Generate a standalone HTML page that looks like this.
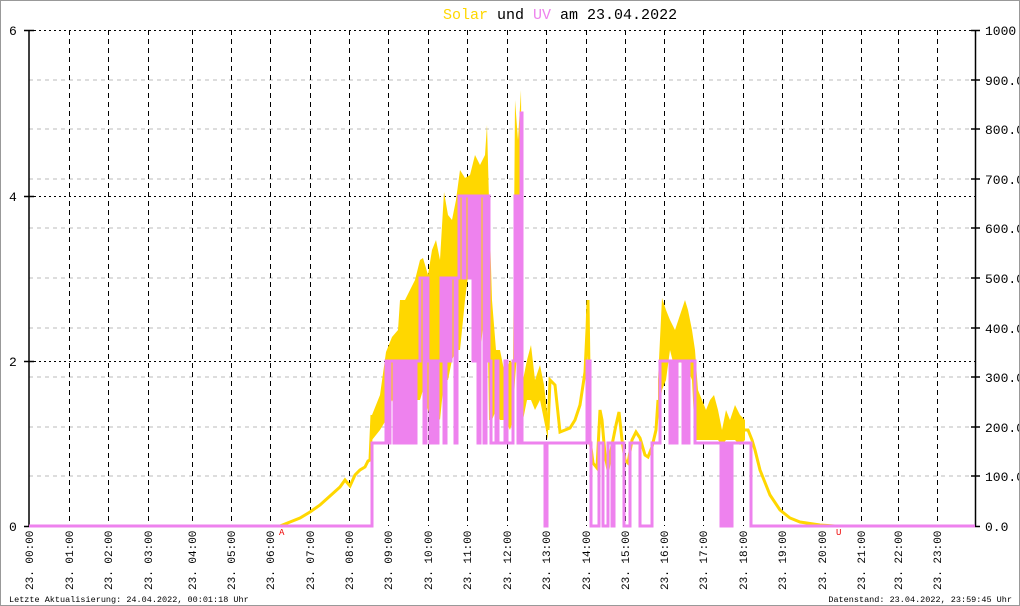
<!DOCTYPE html>
<html><head><meta charset="utf-8"><style>
html,body{margin:0;padding:0;background:#fff}
#w{position:relative;width:1018px;height:604px;border:1px solid #999;overflow:hidden;font-family:"Liberation Mono",monospace}
</style></head><body><div id="w">
<svg width="1018" height="604" viewBox="1 1 1018 604" xmlns="http://www.w3.org/2000/svg" font-family="Liberation Mono, monospace">
<g stroke="#bbb" stroke-width="1" stroke-dasharray="4,4">
<line x1="29" y1="80" x2="975" y2="80"/><line x1="29" y1="129" x2="975" y2="129"/><line x1="29" y1="179" x2="975" y2="179"/><line x1="29" y1="228" x2="975" y2="228"/><line x1="29" y1="278" x2="975" y2="278"/><line x1="29" y1="328" x2="975" y2="328"/><line x1="29" y1="377" x2="975" y2="377"/><line x1="29" y1="427" x2="975" y2="427"/><line x1="29" y1="476" x2="975" y2="476"/>
</g>
<g stroke="#000" stroke-width="1" stroke-dasharray="2,3">
<line x1="29" y1="30.5" x2="975" y2="30.5"/><line x1="29" y1="196.5" x2="975" y2="196.5"/><line x1="29" y1="361.5" x2="975" y2="361.5"/>
</g>
<g stroke="#000" stroke-width="1" stroke-dasharray="5,4">
<line x1="69.5" y1="30" x2="69.5" y2="526"/><line x1="108.5" y1="30" x2="108.5" y2="526"/><line x1="148.5" y1="30" x2="148.5" y2="526"/><line x1="192.5" y1="30" x2="192.5" y2="526"/><line x1="231.5" y1="30" x2="231.5" y2="526"/><line x1="270.5" y1="30" x2="270.5" y2="526"/><line x1="310.5" y1="30" x2="310.5" y2="526"/><line x1="349.5" y1="30" x2="349.5" y2="526"/><line x1="388.5" y1="30" x2="388.5" y2="526"/><line x1="428.5" y1="30" x2="428.5" y2="526"/><line x1="467.5" y1="30" x2="467.5" y2="526"/><line x1="507.5" y1="30" x2="507.5" y2="526"/><line x1="546.5" y1="30" x2="546.5" y2="526"/><line x1="586.5" y1="30" x2="586.5" y2="526"/><line x1="625.5" y1="30" x2="625.5" y2="526"/><line x1="664.5" y1="30" x2="664.5" y2="526"/><line x1="703.5" y1="30" x2="703.5" y2="526"/><line x1="743.5" y1="30" x2="743.5" y2="526"/><line x1="782.5" y1="30" x2="782.5" y2="526"/><line x1="822.5" y1="30" x2="822.5" y2="526"/><line x1="861.5" y1="30" x2="861.5" y2="526"/><line x1="898.5" y1="30" x2="898.5" y2="526"/><line x1="937.5" y1="30" x2="937.5" y2="526"/>
</g>
<g stroke="#000" stroke-width="1.5">
<line x1="29" y1="30" x2="29" y2="526"/><line x1="975.5" y1="30" x2="975.5" y2="526"/>
<line x1="24" y1="30.5" x2="34" y2="30.5"/><line x1="24" y1="196.5" x2="34" y2="196.5"/><line x1="24" y1="361.5" x2="34" y2="361.5"/><line x1="24" y1="526.5" x2="34" y2="526.5"/>
<line x1="971" y1="30.5" x2="980" y2="30.5"/><line x1="971" y1="80" x2="980" y2="80"/><line x1="971" y1="129" x2="980" y2="129"/><line x1="971" y1="179" x2="980" y2="179"/><line x1="971" y1="228" x2="980" y2="228"/><line x1="971" y1="278" x2="980" y2="278"/><line x1="971" y1="328" x2="980" y2="328"/><line x1="971" y1="377" x2="980" y2="377"/><line x1="971" y1="427" x2="980" y2="427"/><line x1="971" y1="476" x2="980" y2="476"/><line x1="971" y1="526.5" x2="980" y2="526.5"/>
</g>
<!-- solar -->
<polygon fill="#ffd700" points="372,415 380,395 386,352 392,337 398,330 400,300 405,300 410,290 415,280 420,260 423,258 428,275 432,250 436,240 440,260 444,192 448,215 452,220 456,200 460,170 465,178 470,175 475,155 480,165 485,155 487,125 489,200 492,300 496,350 500,350 505,375 510,360 513,365 515,100 518,140 521,90 523,380 527,360 531,345 535,380 540,365 544,385 548,420 548,440 544,420 540,400 535,410 531,400 527,400 523,420 521,390 518,340 515,380 513,420 510,430 505,420 500,420 496,410 492,420 489,420 487,280 485,300 480,360 475,280 470,260 465,300 460,350 456,350 452,360 448,380 444,380 440,420 436,410 432,430 428,410 423,390 420,400 415,400 410,410 405,400 400,410 398,420 392,400 386,420 380,430 372,440"/>
<polygon fill="#ffd700" points="658,380 662,298 666,310 670,320 675,330 680,315 685,300 688,310 692,330 695,350 698,390 702,400 706,410 710,400 714,395 718,410 722,430 726,410 730,420 735,405 740,415 745,420 745,440 740,445 735,440 730,440 726,440 722,445 718,440 714,440 710,440 706,440 702,440 698,440 695,440 692,380 688,370 685,370 680,360 675,370 670,350 666,380 662,390 658,420"/>
<polyline fill="none" stroke="#ffd700" stroke-width="3" points="29,526 280,526 290,522 300,518 310,512 320,505 330,496 340,487 345,480 350,486 355,475 360,470 365,467 368,461 370,460 372,415"/>
<polyline fill="none" stroke="#ffd700" stroke-width="3" points="548,430 550,380 555,385 560,432 570,428 575,420 580,405 585,372 587,330 588,300 590,440 593,463 597,468 600,410 602,420 605,455 608,470 612,445 616,425 619,412 622,440 625,460 628,463 632,440 636,432 640,438 645,455 648,457 652,447 656,430 658,400"/>
<polyline fill="none" stroke="#ffd700" stroke-width="3" points="745,430 748,430 752,440 755,450 760,470 770,495 780,510 790,518 800,522 820,525 835,526 975,526"/>
<!-- UV -->
<path fill="none" stroke="#ee82ee" stroke-width="3" d="M29 526 H372 V443 H386 V361 H388 V443 H390 V361 H394 V443 H396 V361 H399 V443 H401 V361 H404 V443 H406 V361 H409 V443 H411 V361 H414 V443 H416 V361 H420 V278 H424 V443 H426 V278 H428 V361 H430 V443 H433 V361 H436 V443 H438 V361 H441 V278 H444 V443 H446 V278 H449 V361 H451 V278 H455 V443 H457 V278 H459 V196 H463 V278 H465 V196 H469 V278 H471 V196 H473 V361 H475 V196 H478 V443 H480 V196 H484 V443 H486 V196 H489 V361 H491 V443 H496 V361 H498 V443 H505 V361 H507 V443 H513 V361 H515 V196 H518 V443 H519 V196 H521 V113 H522 V443 H545 V526 H547 V443 H587 V361 H590 V443 H591 V526 H599 V443 H603 V526 H608 V443 H612 V526 H614 V443 H624 V526 H630 V443 H640 V526 H652 V443 H660 V361 H670 V443 H672 V361 H675 V443 H677 V361 H683 V443 H685 V361 H687 V443 H689 V361 H695 V443 H721 V526 H723 V443 H725 V526 H727 V443 H729 V526 H732 V443 H751 V526 H975"/>
<!-- title -->
<text x="443" y="19" font-size="15"><tspan fill="#ffd700">Solar</tspan><tspan fill="#000"> und </tspan><tspan fill="#ee82ee">UV</tspan><tspan fill="#000"> am 23.04.2022</tspan></text>
<g font-size="13" fill="#000">
<text x="9" y="35">6</text><text x="9" y="201">4</text><text x="9" y="366">2</text><text x="9" y="531">0</text>
<text x="985" y="35">1000</text><text x="985" y="85">900.0</text><text x="985" y="134">800.0</text><text x="985" y="184">700.0</text><text x="985" y="233">600.0</text><text x="985" y="283">500.0</text><text x="985" y="333">400.0</text><text x="985" y="382">300.0</text><text x="985" y="432">200.0</text><text x="985" y="481">100.0</text><text x="985" y="531">0.0</text>
</g>
<text x="279" y="535" font-size="9" fill="#e00">A</text>
<text x="836" y="535" font-size="9" fill="#e00">U</text>
<g font-size="11" fill="#000">
<text transform="translate(33,590) rotate(-90)">23. 00:00</text>
<text transform="translate(73,590) rotate(-90)">23. 01:00</text>
<text transform="translate(112,590) rotate(-90)">23. 02:00</text>
<text transform="translate(152,590) rotate(-90)">23. 03:00</text>
<text transform="translate(196,590) rotate(-90)">23. 04:00</text>
<text transform="translate(235,590) rotate(-90)">23. 05:00</text>
<text transform="translate(274,590) rotate(-90)">23. 06:00</text>
<text transform="translate(314,590) rotate(-90)">23. 07:00</text>
<text transform="translate(353,590) rotate(-90)">23. 08:00</text>
<text transform="translate(392,590) rotate(-90)">23. 09:00</text>
<text transform="translate(432,590) rotate(-90)">23. 10:00</text>
<text transform="translate(471,590) rotate(-90)">23. 11:00</text>
<text transform="translate(511,590) rotate(-90)">23. 12:00</text>
<text transform="translate(550,590) rotate(-90)">23. 13:00</text>
<text transform="translate(590,590) rotate(-90)">23. 14:00</text>
<text transform="translate(629,590) rotate(-90)">23. 15:00</text>
<text transform="translate(668,590) rotate(-90)">23. 16:00</text>
<text transform="translate(707,590) rotate(-90)">23. 17:00</text>
<text transform="translate(747,590) rotate(-90)">23. 18:00</text>
<text transform="translate(786,590) rotate(-90)">23. 19:00</text>
<text transform="translate(826,590) rotate(-90)">23. 20:00</text>
<text transform="translate(865,590) rotate(-90)">23. 21:00</text>
<text transform="translate(902,590) rotate(-90)">23. 22:00</text>
<text transform="translate(941,590) rotate(-90)">23. 23:00</text>
</g>
<text x="9" y="602" font-size="8.5" fill="#000">Letzte Aktualisierung: 24.04.2022, 00:01:18 Uhr</text>
<text x="1012" y="602" font-size="8.5" fill="#000" text-anchor="end">Datenstand: 23.04.2022, 23:59:45 Uhr</text>
</svg>
</div></body></html>
